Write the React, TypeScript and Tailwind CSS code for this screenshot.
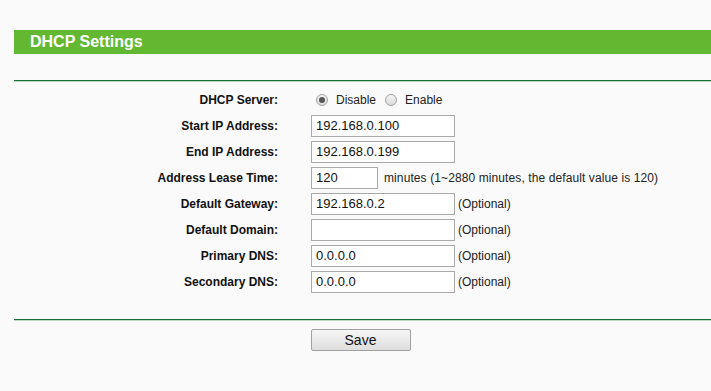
import React from 'react';

const font = { fontFamily: '"Liberation Sans", Arial, sans-serif' };

const Row = ({ label, children }: { label: string; children: React.ReactNode }) => (
  <div className="flex items-center h-[26px]">
    <div className="w-[264px] text-right text-[12px] font-bold text-[#111]">{label}</div>
    <div className="flex items-center pl-[33px] text-[12px] text-[#222]">{children}</div>
  </div>
);

const Field = ({ value, w = 'w-[144px]' }: { value: string; w?: string }) => (
  <div className={`${w} h-[22px] bg-white border border-[#a9a9a9] flex items-center px-[4px] text-[13px] text-[#111]`}>
    {value}
  </div>
);

const Radio = ({ checked }: { checked?: boolean }) => (
  <span className="w-[12px] h-[12px] rounded-full border border-[#a0a0a0] bg-gradient-to-b from-[#f4f4f4] to-[#dcdcdc] flex items-center justify-center">
    {checked && <span className="w-[6px] h-[6px] rounded-full bg-[#555]" />}
  </span>
);

const Optional = () => <span className="ml-[3px] text-[#222]">(Optional)</span>;

const Rule = () => (
  <div className="ml-[14px]">
    <div className="h-px bg-[#1b6d37]" />
    <div className="h-px bg-[#b9dcc0]" />
  </div>
);

export default function App() {
  return (
    <div className="w-[711px] h-[391px] bg-[#fafafa] overflow-hidden pt-[30px]" style={font}>
      {/* Title bar */}
      <div className="ml-[14px] h-[24px] bg-[#63b832] flex items-center pl-[16px]">
        <span className="text-white font-bold text-[16px]">DHCP Settings</span>
      </div>

      <div className="mt-[26px]">
        <Rule />
      </div>

      <div className="ml-[14px] mt-[5px]">
        <Row label="DHCP Server:">
          <div className="flex items-center text-[12px] ml-[5px]">
            <Radio checked />
            <span className="ml-[8px]">Disable</span>
            <span className="ml-[9px]"><Radio /></span>
            <span className="ml-[8px]">Enable</span>
          </div>
        </Row>
        <Row label="Start IP Address:"><Field value="192.168.0.100" /></Row>
        <Row label="End IP Address:"><Field value="192.168.0.199" /></Row>
        <Row label="Address Lease Time:">
          <Field value="120" w="w-[67px]" />
          <span className="ml-[6px] tracking-[0.1px]">minutes (1~2880 minutes, the default value is 120)</span>
        </Row>
        <Row label="Default Gateway:"><Field value="192.168.0.2" /><Optional /></Row>
        <Row label="Default Domain:"><Field value="" /><Optional /></Row>
        <Row label="Primary DNS:"><Field value="0.0.0.0" /><Optional /></Row>
        <Row label="Secondary DNS:"><Field value="0.0.0.0" /><Optional /></Row>
      </div>

      <div className="mt-[24px]">
        <Rule />
      </div>

      <div className="flex justify-center pl-[10px] mt-[8px]">
        <button className="w-[100px] h-[22px] border border-[#a0a0a0] rounded-[2px] bg-gradient-to-b from-[#f6f6f6] to-[#dedede] text-[14px] text-[#111]">
          Save
        </button>
      </div>
    </div>
  );
}
